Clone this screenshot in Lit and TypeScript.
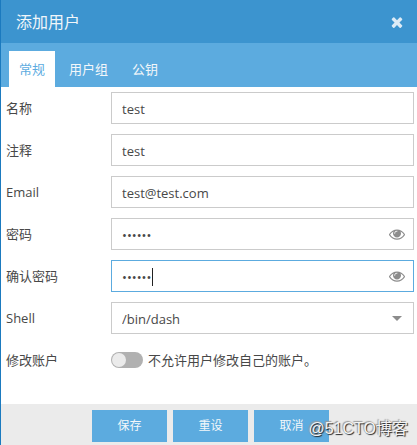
import { LitElement, html, css, svg } from "lit";
import { customElement, state } from "lit/decorators.js";

const eyeIcon = html`<svg class="icon" viewBox="0 0 1792 1792" aria-hidden="true">
  ${svg`<path d="M1664 960q-152-236-381-353 61 104 61 225 0 185-131.5 316.5t-316.5 131.5-316.5-131.5-131.5-316.5q0-121 61-225-229 117-381 353 133 205 333.5 326.5t434.5 121.5 434.5-121.5 333.5-326.5zm-720-384q0-20-14-34t-34-14q-125 0-214.5 89.5t-89.5 214.5q0 20 14 34t34 14 34-14 14-34q0-86 61-147t147-61q20 0 34-14t14-34zm848 384q0 34-20 69-140 230-376.5 368.5t-499.5 138.5-499.5-139-376.5-368q-20-35-20-69t20-69q140-229 376.5-368t499.5-139 499.5 139 376.5 368q20 35 20 69z"/>`}
</svg>`;

const closeIcon = html`<svg class="icon" viewBox="0 0 1792 1792" aria-hidden="true">
  ${svg`<path d="M1490 1322q0 40-28 68l-136 136q-28 28-68 28t-68-28l-294-294-294 294q-28 28-68 28t-68-28l-136-136q-28-28-28-68t28-68l294-294-294-294q-28-28-28-68t28-68l136-136q28-28 68-28t68 28l294 294 294-294q28-28 68-28t68 28l136 136q28 28 28 68t-28 68l-294 294 294 294q28 28 28 68z"/>`}
</svg>`;

@customElement("app-root")
export class AppRoot extends LitElement {
  @state() private tab = 0;

  static styles = css`
    :host {
      display: block;
      font-family: "Open Sans", "Noto Sans CJK SC", sans-serif;
      font-size: 13px;
      line-height: 20px;
      color: #484848;
    }
    * {
      box-sizing: border-box;
    }
    button,
    input,
    select {
      font: inherit;
      color: inherit;
      margin: 0;
      padding: 0;
      border: 0;
      border-radius: 0;
      background: none;
      outline: none;
    }
    .dialog {
      display: flex;
      flex-direction: column;
      min-height: 100vh;
      border-left: 1px solid #1b7abf;
      background: #fff;
    }
    .header {
      display: flex;
      align-items: center;
      justify-content: space-between;
      height: 43px;
      padding: 0 12px 0 15px;
      background: #3c94cf;
      color: #f0f6fa;
    }
    .title {
      margin: 0;
      font-size: 16px;
      font-weight: 400;
    }
    .icon {
      display: block;
      width: 16px;
      height: 16px;
      fill: currentColor;
    }
    .close {
      color: #dcebf6;
    }
    .tabs {
      display: flex;
      align-items: flex-end;
      gap: 4px;
      height: 44px;
      padding: 0 8px;
      background: #5cabdf;
    }
    .tab {
      height: 36px;
      padding: 0 10px;
      color: #f3f7fa;
    }
    .tab.active {
      background: #fff;
      color: #5cabdf;
    }
    .form {
      flex: 1;
      display: flex;
      flex-direction: column;
      gap: 10px;
      padding: 5px 3px 28px 5px;
    }
    .row {
      display: grid;
      grid-template-columns: 105px 1fr;
      align-items: center;
      min-height: 32px;
    }
    .control {
      position: relative;
      display: flex;
      align-items: center;
      height: 32px;
      border: 1px solid #cbcbcb;
    }
    .control.focused {
      border-color: #5cabdf;
    }
    .field {
      flex: 1;
      min-width: 0;
      height: 30px;
      padding: 2px 8px 0 10px;
      appearance: none;
    }
    .reveal {
      margin-right: 8px;
      color: #8c8c8c;
    }
    .caret {
      position: absolute;
      left: 40px;
      top: 7px;
      width: 1px;
      height: 18px;
      background: #222;
    }
    .arrow {
      position: absolute;
      right: 11px;
      top: 13px;
      border: 5px solid transparent;
      border-top-color: #8c8c8c;
      border-bottom: 0;
      pointer-events: none;
    }
    .toggle {
      display: flex;
      align-items: center;
      gap: 5px;
    }
    .switch {
      appearance: none;
      display: flex;
      width: 32px;
      height: 16px;
      padding: 1px;
      border-radius: 8px;
      background: #b1b1b1;
    }
    .switch::before {
      content: "";
      width: 14px;
      height: 14px;
      border-radius: 50%;
      background: #ebebeb;
    }
    .switch:checked {
      justify-content: flex-end;
      background: #5cabdf;
    }
    .footer {
      position: relative;
      display: flex;
      justify-content: center;
      gap: 6px;
      padding: 6px 0 3px 3px;
      background: #ebebeb;
    }
    .action {
      width: 75px;
      height: 32px;
      font-size: 12px;
      background: #5cabdf;
      color: #f3f7fa;
    }
    .watermark {
      position: absolute;
      right: 9px;
      bottom: 6px;
      font-family: "Liberation Sans", "Noto Sans CJK SC", sans-serif;
      font-size: 16px;
      color: #f4f4f4;
      text-shadow: 1px 1px 1px #222, -1px -1px 1px #999;
      pointer-events: none;
    }
  `;

  private textRow(id: string, label: string, value: string) {
    return html`<div class="row">
      <label for=${id}>${label}</label>
      <div class="control"><input class="field" id=${id} type="text" .value=${value} /></div>
    </div>`;
  }

  private passwordRow(id: string, label: string, focused = false) {
    return html`<div class="row">
      <label for=${id}>${label}</label>
      <div class="control ${focused ? "focused" : ""}">
        <input class="field" id=${id} type="password" .value=${"secret"} />
        ${focused ? html`<span class="caret"></span>` : ""}
        <button class="reveal" type="button" aria-label="显示密码">${eyeIcon}</button>
      </div>
    </div>`;
  }

  render() {
    return html`<div class="dialog" role="dialog" aria-labelledby="title">
      <header class="header">
        <h1 class="title" id="title">添加用户</h1>
        <button class="close" type="button" aria-label="关闭">${closeIcon}</button>
      </header>
      <nav class="tabs" role="tablist">
        ${["常规", "用户组", "公钥"].map(
          (name, i) => html`<button
            class="tab ${i === this.tab ? "active" : ""}"
            type="button"
            role="tab"
            aria-selected=${i === this.tab}
            @click=${() => (this.tab = i)}
          >${name}</button>`
        )}
      </nav>
      <form class="form">
        ${this.textRow("name", "名称", "test")}
        ${this.textRow("comment", "注释", "test")}
        ${this.textRow("email", "Email", "test@test.com")}
        ${this.passwordRow("password", "密码")}
        ${this.passwordRow("confirm", "确认密码", true)}
        <div class="row">
          <label for="shell">Shell</label>
          <div class="control">
            <select class="field" id="shell">
              <option>/bin/dash</option>
            </select>
            <span class="arrow"></span>
          </div>
        </div>
        <div class="row">
          <label for="modify">修改账户</label>
          <div class="toggle">
            <input class="switch" id="modify" type="checkbox" aria-describedby="modify-hint" />
            <span id="modify-hint">不允许用户修改自己的账户。</span>
          </div>
        </div>
      </form>
      <footer class="footer">
        <button class="action" type="button">保存</button>
        <button class="action" type="button">重设</button>
        <button class="action" type="button">取消</button>
        <span class="watermark">@51CTO博客</span>
      </footer>
    </div>`;
  }
}
